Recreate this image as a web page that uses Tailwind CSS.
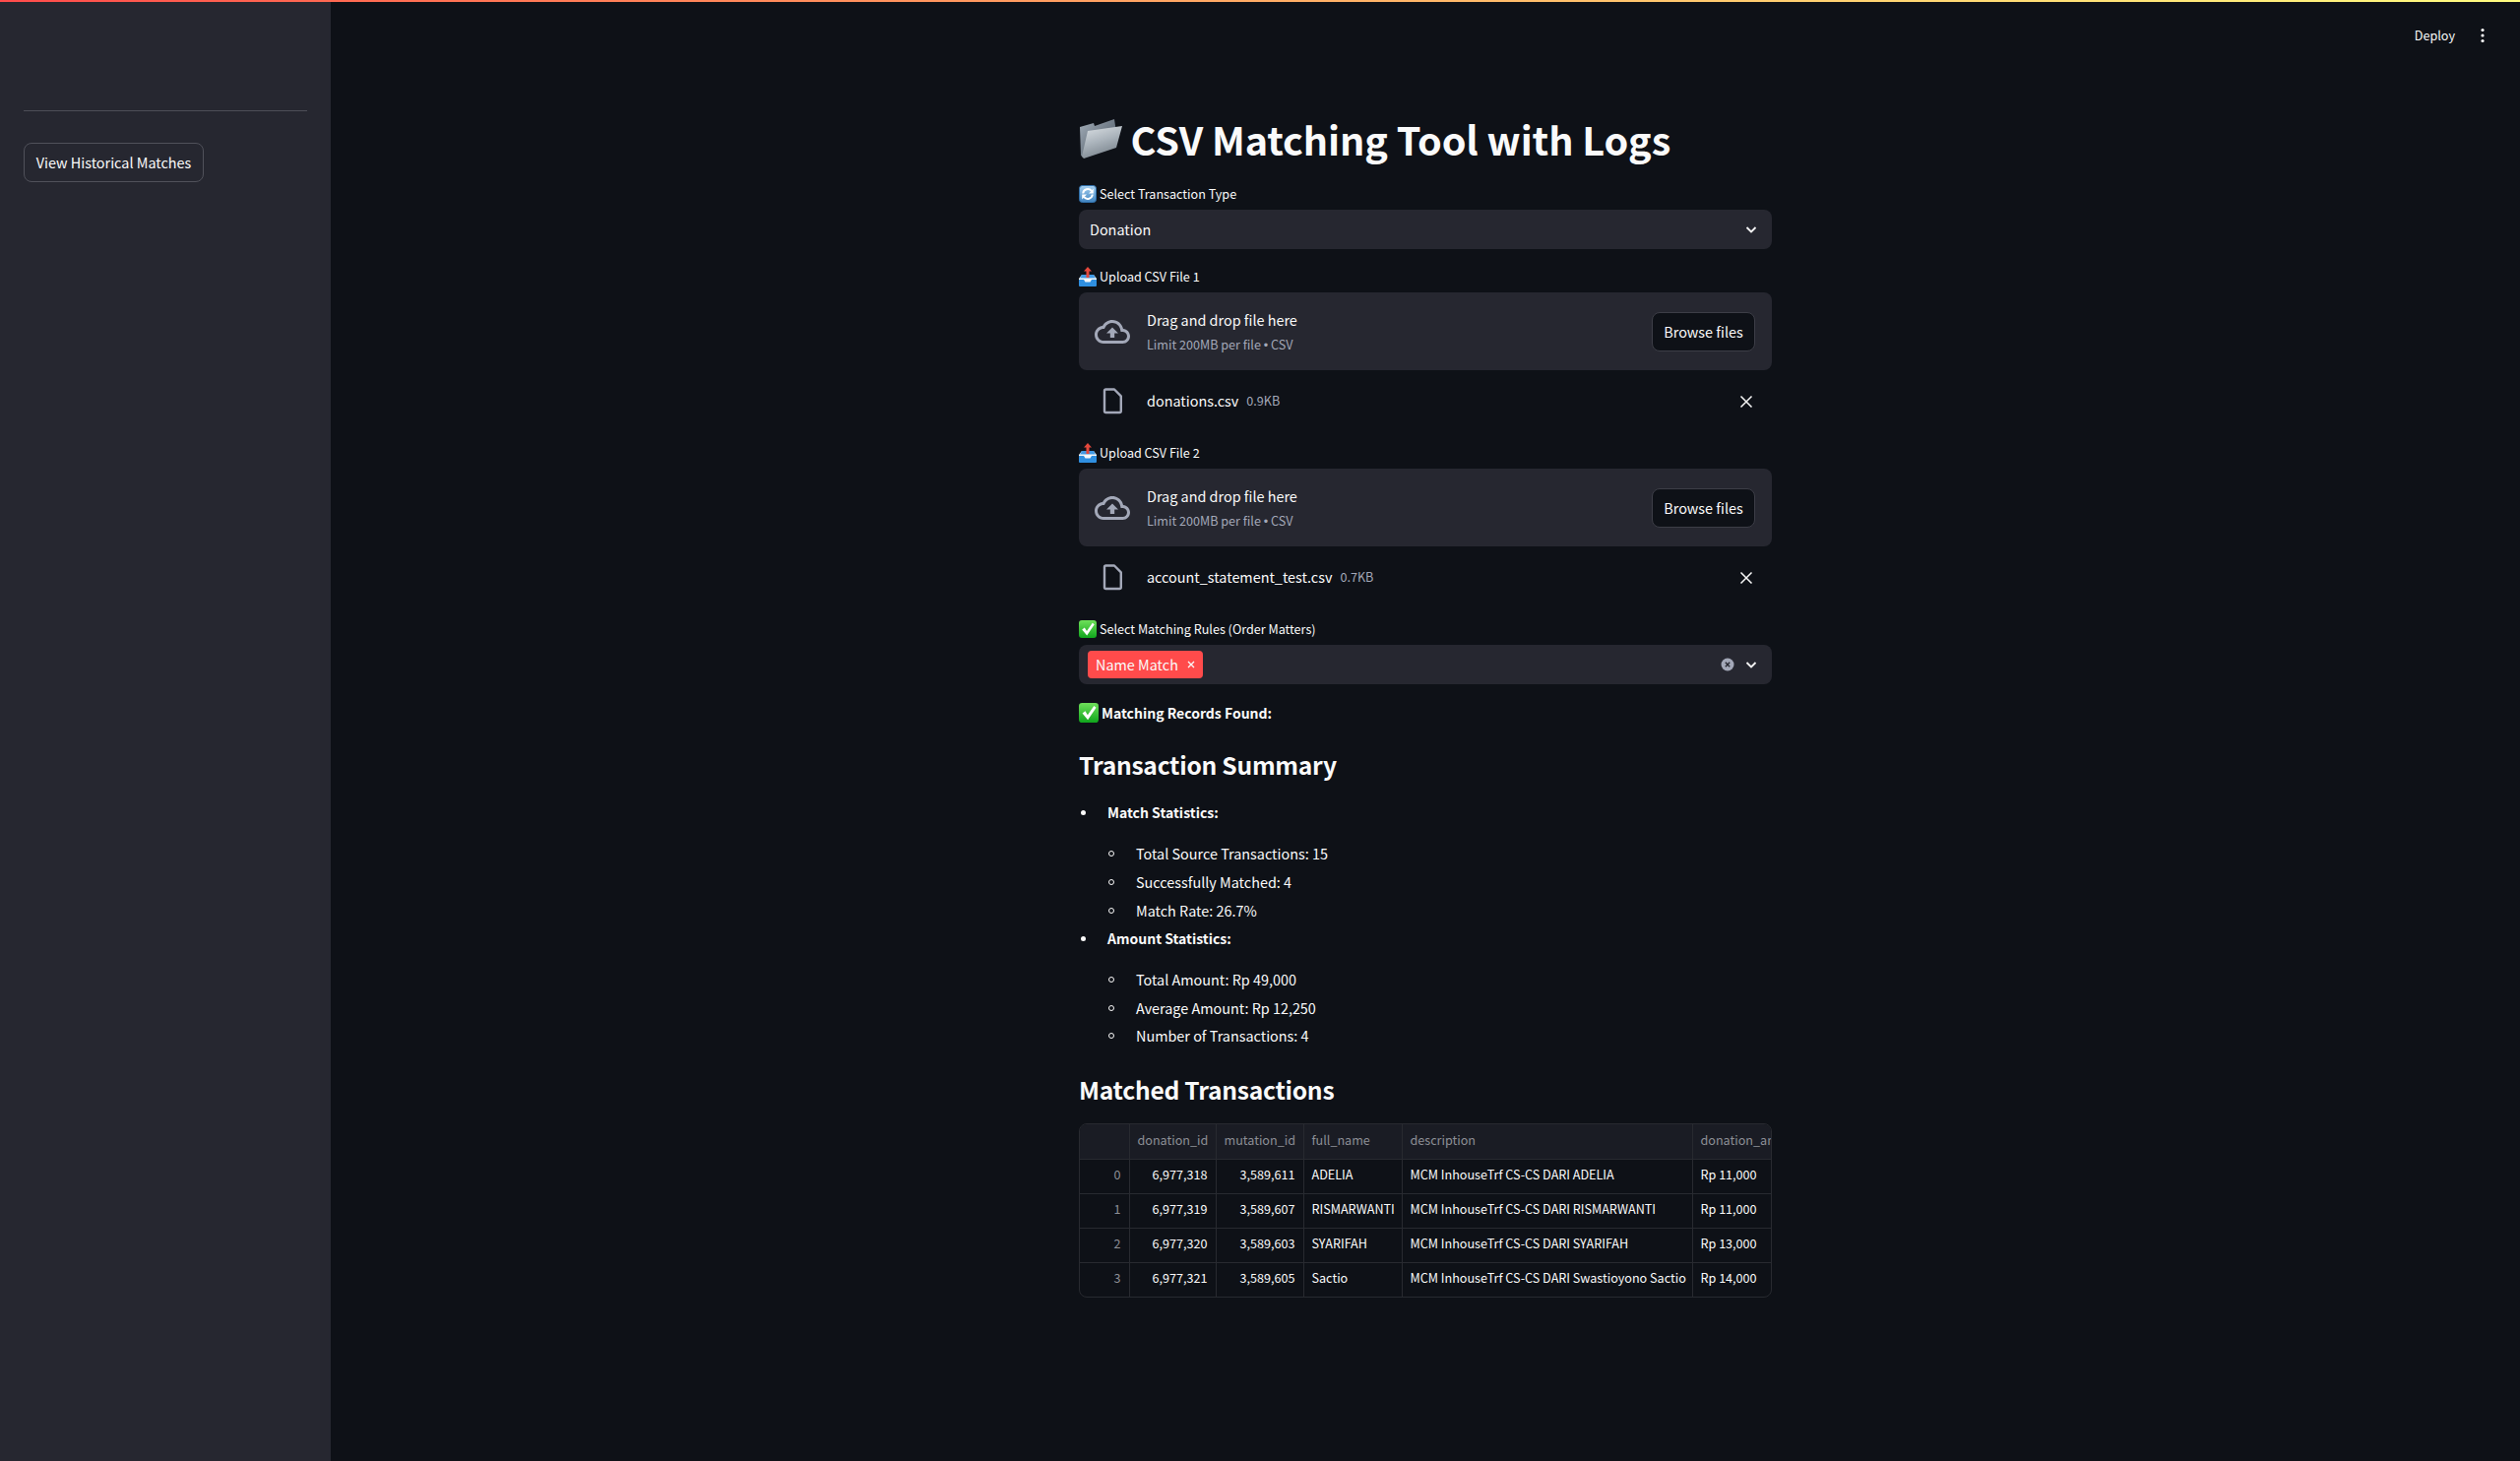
<!doctype html>
<html lang="en">
<head>
<meta charset="utf-8">
<title>CSV Matching Tool with Logs</title>
<script src="https://cdn.jsdelivr.net/npm/@tailwindcss/browser@4"></script>
</head>
<body class="bg-[#0e1117]">
<div class="relative flex h-[1484px] w-[2560px] overflow-hidden bg-[#0e1117] font-['Noto_Sans_CJK_SC','Liberation_Sans',sans-serif] text-[14.400px] text-[#fafafa]">
  <div class="absolute inset-x-0 top-0 h-[2px] bg-gradient-to-r from-[#ff4b4b] to-[#fffd80]"></div>

  <aside class="w-[336px] shrink-0 bg-[#262730] px-[24px] pt-[112px]">
    <div class="h-px w-[288px] bg-[#4d4e57]"></div>
    <button class="mt-[32px] flex h-[40px] w-[183px] items-center justify-center rounded-[8px] border border-[#50515a] bg-[#262730] leading-[20px]">View Historical Matches</button>
  </aside>

  <div class="absolute right-[24px] top-[24px] flex h-[24px] items-center">
    <span class="text-[12.600px] leading-[24px]">Deploy</span>
    <svg class="ml-[18px] mr-[4px]" width="20" height="20" viewBox="0 0 20 20" fill="#fafafa"><circle cx="10" cy="4.500" r="1.600"/><circle cx="10" cy="10" r="1.600"/><circle cx="10" cy="15.500" r="1.600"/></svg>
  </div>

  <main class="flex-1">
    <div class="mx-auto w-[704px] pt-[111px]">
      <h1 class="flex h-[60px] items-center text-[39.600px] font-bold leading-[60px] tracking-[-0.1px]">
        <svg class="mr-[6.500px] shrink-0" width="46" height="42" viewBox="0 0 46 42">
          <defs>
            <linearGradient id="fb" x1="0" y1="0" x2="1" y2="1"><stop offset="0" stop-color="#a4afba"/><stop offset="1" stop-color="#3f4a56"/></linearGradient>
            <linearGradient id="ff" x1="0" y1="0" x2="0.400" y2="1"><stop offset="0" stop-color="#dde2e6"/><stop offset="0.550" stop-color="#aab3bb"/><stop offset="1" stop-color="#7d8790"/></linearGradient>
            <linearGradient id="ck" x1="0" y1="0" x2="0" y2="1"><stop offset="0" stop-color="#6fe05a"/><stop offset="1" stop-color="#0fa51c"/></linearGradient>
            <linearGradient id="ar" x1="0" y1="0" x2="0" y2="1"><stop offset="0" stop-color="#a9d2f2"/><stop offset="1" stop-color="#3f83c0"/></linearGradient>
          </defs>
          <path d="M1 9 L15 5 L16 8 L36 1 L38 14 L5 40 L2 38 Z" fill="url(#fb)"/>
          <path d="M9 13 L44 8 L38 30 L5 41 L3 39 Z" fill="url(#ff)"/>
        </svg>
        CSV Matching Tool with Logs
      </h1>

      <div class="mt-[16px] flex h-[20px] items-center leading-[20px]">
        <svg class="mr-[3px] shrink-0" width="18" height="18" viewBox="0 0 18 18" fill="none"><rect x=".5" y=".5" width="17" height="17" rx="3" fill="url(#ar)" stroke="#2f6ea8"/><path d="M4.200 8.500 A4.900 4.900 0 0 1 12.800 5.800 M13.800 9.500 A4.900 4.900 0 0 1 5.200 12.200" stroke="#fff" stroke-width="2"/><path d="M14.800 3.600 V8.400 H10 Z M3.200 14.400 V9.600 H8 Z" fill="#fff"/></svg>
        <span class="text-[12.600px]">Select Transaction Type</span>
      </div>
      <div class="mt-[6px] flex h-[40px] items-center justify-between rounded-[8px] bg-[#262730] pl-[11px] pr-[13px] leading-[24px]">
        <span>Donation</span>
        <svg width="16" height="16" viewBox="0 0 16 16" fill="none" stroke="#fafafa" stroke-width="1.800"><path d="M3.500 6 L8 10.500 L12.500 6"/></svg>
      </div>

      <div class="mt-[18px] flex h-[20px] items-center leading-[20px]">
        <svg class="mr-[3px] shrink-0" width="18" height="20" viewBox="0 0 18 20"><path d="M0 12 L3 8 H15 L18 12 V19 H0 Z" fill="#f4f6f8"/><path d="M0 13 H5 L6.500 15.500 H11.500 L13 13 H18 V19 A1 1 0 0 1 17 20 H1 A1 1 0 0 1 0 19 Z" fill="#2f8fe0"/><path d="M3 8 H15 L17 11.500 H1 Z" fill="#2f8fe0" opacity=".9"/><path d="M9 0 L13 4.500 H10.500 V11 H7.500 V4.500 H5 Z" fill="#e5483c"/></svg>
        <span class="text-[12.600px]">Upload CSV File 1</span>
      </div>
      <div class="mt-[6px] flex h-[79px] items-center justify-between rounded-[8px] bg-[#262730] pl-[16px] pr-[17px]">
        <div class="flex items-center">
          <svg width="36" height="36" viewBox="0 0 24 24" fill="#a3a8b8"><path d="M19.350 10.040C18.670 6.590 15.640 4 12 4 9.110 4 6.600 5.640 5.350 8.040 2.340 8.360 0 10.910 0 14c0 3.310 2.690 6 6 6h13c2.760 0 5-2.240 5-5 0-2.640-2.050-4.780-4.650-4.960zM19 18H6c-2.210 0-4-1.790-4-4 0-2.050 1.530-3.760 3.560-3.970l1.070-.11.500-.950C8.080 7.140 9.940 6 12 6c2.620 0 4.880 1.860 5.390 4.430l.300 1.500 1.530.110c1.560.100 2.780 1.410 2.780 2.960 0 1.650-1.350 3-3 3zM8 13h2.550v3h2.900v-3H16l-4-4z"/></svg>
          <div class="ml-[17px]">
            <div class="leading-[24px]">Drag and drop file here</div>
            <div class="mt-[3px] text-[12.600px] leading-[20px] text-[#a3a8b8]">Limit 200MB per file <span class="font-['Liberation_Sans']">•</span> CSV</div>
          </div>
        </div>
        <button class="flex h-[40px] w-[105px] items-center justify-center rounded-[8px] border border-[#3d3e47] bg-[#0e1117] leading-[24px]">Browse files</button>
      </div>
      <div class="mt-[7px] flex h-[48px] items-center pl-[16px] pr-[17px]">
        <svg class="shrink-0" width="36" height="36" viewBox="0 0 36 36" fill="none" stroke="#a3a8b8" stroke-width="2.400" stroke-linejoin="round"><path d="M11.500 6.500 H20 L26.800 13.300 V28.500 A1.500 1.500 0 0 1 25.300 30 H11.500 A1.500 1.500 0 0 1 10 28.500 V8 A1.500 1.500 0 0 1 11.500 6.500 Z"/></svg>
        <span class="ml-[17px] leading-[24px]">donations.csv</span>
        <span class="ml-[8px] text-[12.600px] leading-[20px] text-[#a3a8b8]">0.9KB</span>
        <svg class="ml-auto mr-[-1px]" width="20" height="20" viewBox="0 0 20 20" fill="none" stroke="#fafafa" stroke-width="1.500"><path d="M4.500 5.500 L15.500 16.500 M15.500 5.500 L4.500 16.500"/></svg>
      </div>

      <div class="mt-[19px] flex h-[20px] items-center leading-[20px]">
        <svg class="mr-[3px] shrink-0" width="18" height="20" viewBox="0 0 18 20"><path d="M0 12 L3 8 H15 L18 12 V19 H0 Z" fill="#f4f6f8"/><path d="M0 13 H5 L6.500 15.500 H11.500 L13 13 H18 V19 A1 1 0 0 1 17 20 H1 A1 1 0 0 1 0 19 Z" fill="#2f8fe0"/><path d="M3 8 H15 L17 11.500 H1 Z" fill="#2f8fe0" opacity=".9"/><path d="M9 0 L13 4.500 H10.500 V11 H7.500 V4.500 H5 Z" fill="#e5483c"/></svg>
        <span class="text-[12.600px]">Upload CSV File 2</span>
      </div>
      <div class="mt-[6px] flex h-[79px] items-center justify-between rounded-[8px] bg-[#262730] pl-[16px] pr-[17px]">
        <div class="flex items-center">
          <svg width="36" height="36" viewBox="0 0 24 24" fill="#a3a8b8"><path d="M19.350 10.040C18.670 6.590 15.640 4 12 4 9.110 4 6.600 5.640 5.350 8.040 2.340 8.360 0 10.910 0 14c0 3.310 2.690 6 6 6h13c2.760 0 5-2.240 5-5 0-2.640-2.050-4.780-4.650-4.960zM19 18H6c-2.210 0-4-1.790-4-4 0-2.050 1.530-3.760 3.560-3.970l1.070-.11.500-.950C8.080 7.140 9.940 6 12 6c2.620 0 4.880 1.860 5.390 4.430l.300 1.500 1.530.110c1.560.100 2.780 1.410 2.780 2.960 0 1.650-1.350 3-3 3zM8 13h2.550v3h2.900v-3H16l-4-4z"/></svg>
          <div class="ml-[17px]">
            <div class="leading-[24px]">Drag and drop file here</div>
            <div class="mt-[3px] text-[12.600px] leading-[20px] text-[#a3a8b8]">Limit 200MB per file <span class="font-['Liberation_Sans']">•</span> CSV</div>
          </div>
        </div>
        <button class="flex h-[40px] w-[105px] items-center justify-center rounded-[8px] border border-[#3d3e47] bg-[#0e1117] leading-[24px]">Browse files</button>
      </div>
      <div class="mt-[7px] flex h-[48px] items-center pl-[16px] pr-[17px]">
        <svg class="shrink-0" width="36" height="36" viewBox="0 0 36 36" fill="none" stroke="#a3a8b8" stroke-width="2.400" stroke-linejoin="round"><path d="M11.500 6.500 H20 L26.800 13.300 V28.500 A1.500 1.500 0 0 1 25.300 30 H11.500 A1.500 1.500 0 0 1 10 28.500 V8 A1.500 1.500 0 0 1 11.500 6.500 Z"/></svg>
        <span class="ml-[17px] leading-[24px]">account_statement_test.csv</span>
        <span class="ml-[8px] text-[12.600px] leading-[20px] text-[#a3a8b8]">0.7KB</span>
        <svg class="ml-auto mr-[-1px]" width="20" height="20" viewBox="0 0 20 20" fill="none" stroke="#fafafa" stroke-width="1.500"><path d="M4.500 5.500 L15.500 16.500 M15.500 5.500 L4.500 16.500"/></svg>
      </div>

      <div class="mt-[19px] flex h-[20px] items-center leading-[20px]">
        <svg class="mr-[3px] shrink-0" width="18" height="18" viewBox="0 0 18 18"><rect width="18" height="18" rx="3" fill="url(#ck)"/><path d="M3.200 9.500 L5.800 7.500 L8 11 L13.800 2.800 L15.800 4.300 L8.200 15.500 Z" fill="#fff"/></svg>
        <span class="text-[12.600px]">Select Matching Rules (Order Matters)</span>
      </div>
      <div class="mt-[6px] flex h-[40px] items-center rounded-[8px] bg-[#262730] pl-[9px] pr-[13px]">
        <span class="flex h-[28px] w-[117px] items-center rounded-[4px] bg-[#ff4b4b] pl-[8px] leading-[28px]">Name Match<svg class="ml-[8px]" width="10" height="10" viewBox="0 0 10 10" fill="none" stroke="#fafafa" stroke-width="1.300"><path d="M2 2 L8 8 M8 2 L2 8"/></svg></span>
        <svg class="ml-auto" width="14" height="14" viewBox="0 0 14 14"><circle cx="7" cy="7" r="6.500" fill="#a3a8b8"/><path d="M4.800 4.800 L9.200 9.200 M9.200 4.800 L4.800 9.200" stroke="#262730" stroke-width="1.400"/></svg>
        <svg class="ml-[9px]" width="16" height="16" viewBox="0 0 16 16" fill="none" stroke="#fafafa" stroke-width="1.800"><path d="M3.500 6 L8 10.500 L12.500 6"/></svg>
      </div>

      <div class="mt-[17px] flex h-[24px] items-center text-[14px] font-bold leading-[24px]">
        <svg class="mr-[3px] shrink-0" width="20" height="20" viewBox="0 0 18 18"><rect width="18" height="18" rx="3" fill="url(#ck)"/><path d="M3.200 9.500 L5.800 7.500 L8 11 L13.800 2.800 L15.800 4.300 L8.200 15.500 Z" fill="#fff"/></svg>
        Matching Records Found:
      </div>

      <h2 class="mt-[20px] h-[40px] text-[24.600px] font-bold leading-[40px] tracking-[-0.25px]">Transaction Summary</h2>

      <div class="mt-[17px] leading-[24px]">
        <div class="flex h-[24px] items-center text-[14px] font-bold"><span class="ml-[2px] mr-[22px] size-[5px] rounded-full bg-[#fafafa]"></span>Match Statistics:</div>
        <div class="mt-[18px] flex h-[24px] items-center"><span class="ml-[30px] mr-[22px] size-[6px] rounded-full border border-[#fafafa]"></span>Total Source Transactions: 15</div>
        <div class="mt-[5px] flex h-[24px] items-center"><span class="ml-[30px] mr-[22px] size-[6px] rounded-full border border-[#fafafa]"></span>Successfully Matched: 4</div>
        <div class="mt-[5px] flex h-[24px] items-center"><span class="ml-[30px] mr-[22px] size-[6px] rounded-full border border-[#fafafa]"></span>Match Rate: 26.7%</div>
        <div class="mt-[4px] flex h-[24px] items-center text-[14px] font-bold"><span class="ml-[2px] mr-[22px] size-[5px] rounded-full bg-[#fafafa]"></span>Amount Statistics:</div>
        <div class="mt-[18px] flex h-[24px] items-center"><span class="ml-[30px] mr-[22px] size-[6px] rounded-full border border-[#fafafa]"></span>Total Amount: Rp 49,000</div>
        <div class="mt-[5px] flex h-[24px] items-center"><span class="ml-[30px] mr-[22px] size-[6px] rounded-full border border-[#fafafa]"></span>Average Amount: Rp 12,250</div>
        <div class="mt-[4px] flex h-[24px] items-center"><span class="ml-[30px] mr-[22px] size-[6px] rounded-full border border-[#fafafa]"></span>Number of Transactions: 4</div>
      </div>

      <h2 class="mt-[22px] h-[40px] text-[24.600px] font-bold leading-[40px] tracking-[-0.25px]">Matched Transactions</h2>

      <div class="mt-[15px] h-[177px] overflow-hidden rounded-[8px] border border-[#282a30] text-[12.600px] leading-[30px]">
        <table class="w-[717px] table-fixed border-collapse [&_td]:pb-[3px] [&_th]:pb-[3px]">
          <colgroup><col class="w-[50px]"><col class="w-[88px]"><col class="w-[89px]"><col class="w-[100px]"><col class="w-[295px]"><col class="w-[95px]"></colgroup>
          <thead class="bg-[#1a1c24] text-[#8d8f96]">
            <tr class="h-[35px]"><th class="border-b border-r border-[#282a30] font-normal"></th><th class="border border-t-0 border-[#282a30] px-[8px] text-left font-normal">donation_id</th><th class="border border-t-0 border-[#282a30] px-[8px] text-left font-normal">mutation_id</th><th class="border border-t-0 border-[#282a30] px-[8px] text-left font-normal">full_name</th><th class="border border-t-0 border-[#282a30] px-[8px] text-left font-normal">description</th><th class="border-b border-l border-[#282a30] px-[8px] text-left font-normal whitespace-nowrap">donation_amount</th></tr>
          </thead>
          <tbody>
            <tr class="h-[35px]"><td class="border-b border-r border-[#282a30] px-[8px] text-right text-[#8d8f96]">0</td><td class="border border-t-0 border-[#282a30] px-[8px] text-right">6,977,318</td><td class="border border-t-0 border-[#282a30] px-[8px] text-right">3,589,611</td><td class="border border-t-0 border-[#282a30] px-[8px]">ADELIA</td><td class="border border-t-0 border-[#282a30] px-[8px] whitespace-nowrap">MCM InhouseTrf CS-CS DARI ADELIA</td><td class="border-b border-l border-[#282a30] px-[8px]">Rp 11,000</td></tr>
            <tr class="h-[35px]"><td class="border-b border-r border-[#282a30] px-[8px] text-right text-[#8d8f96]">1</td><td class="border border-t-0 border-[#282a30] px-[8px] text-right">6,977,319</td><td class="border border-t-0 border-[#282a30] px-[8px] text-right">3,589,607</td><td class="border border-t-0 border-[#282a30] px-[8px]">RISMARWANTI</td><td class="border border-t-0 border-[#282a30] px-[8px] whitespace-nowrap">MCM InhouseTrf CS-CS DARI RISMARWANTI</td><td class="border-b border-l border-[#282a30] px-[8px]">Rp 11,000</td></tr>
            <tr class="h-[35px]"><td class="border-b border-r border-[#282a30] px-[8px] text-right text-[#8d8f96]">2</td><td class="border border-t-0 border-[#282a30] px-[8px] text-right">6,977,320</td><td class="border border-t-0 border-[#282a30] px-[8px] text-right">3,589,603</td><td class="border border-t-0 border-[#282a30] px-[8px]">SYARIFAH</td><td class="border border-t-0 border-[#282a30] px-[8px] whitespace-nowrap">MCM InhouseTrf CS-CS DARI SYARIFAH</td><td class="border-b border-l border-[#282a30] px-[8px]">Rp 13,000</td></tr>
            <tr class="h-[35px]"><td class="border-r border-[#282a30] px-[8px] text-right text-[#8d8f96]">3</td><td class="border-x border-[#282a30] px-[8px] text-right">6,977,321</td><td class="border-x border-[#282a30] px-[8px] text-right">3,589,605</td><td class="border-x border-[#282a30] px-[8px]">Sactio</td><td class="border-x border-[#282a30] px-[8px] whitespace-nowrap">MCM InhouseTrf CS-CS DARI Swastioyono Sactio</td><td class="border-l border-[#282a30] px-[8px]">Rp 14,000</td></tr>
          </tbody>
        </table>
      </div>
    </div>
  </main>
</div>
</body>
</html>
